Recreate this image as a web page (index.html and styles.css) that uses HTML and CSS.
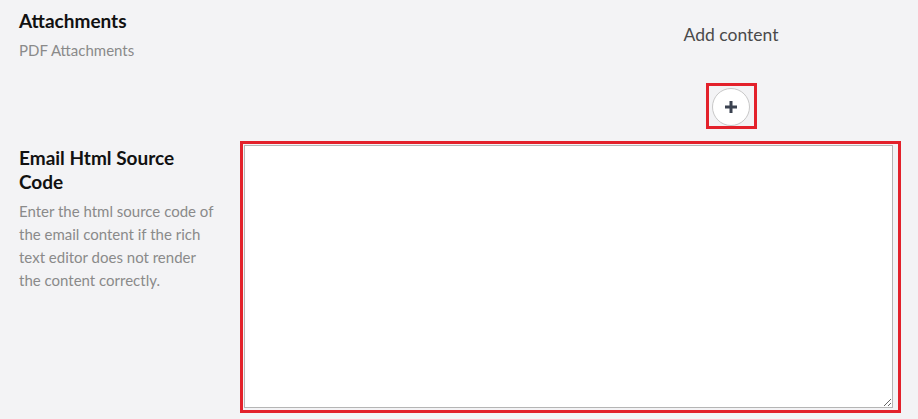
FILE: index.html
```html
<!DOCTYPE html>
<html lang="en">
<head>
<meta charset="utf-8">
<title>Email form</title>
<link rel="stylesheet" href="styles.css">
</head>
<body>
<div class="form">
  <div class="row row-attachments">
    <div class="label-col">
      <div class="label-title">Attachments</div>
      <div class="label-desc">PDF Attachments</div>
    </div>
    <div class="field-col add-area">
      <div class="add-title">Add content</div>
      <div class="add-frame">
        <button class="add-btn" type="button" aria-label="Add content">
          <svg width="14" height="14" viewBox="0 0 14 14"><path d="M7 1v12M1 7h12" stroke="#3b4250" stroke-width="3" fill="none"/></svg>
        </button>
      </div>
    </div>
  </div>
  <div class="row row-source">
    <div class="label-col">
      <div class="label-title">Email Html Source Code</div>
      <div class="label-desc">Enter the html source code of the email content if the rich text editor does not render the content correctly.</div>
    </div>
    <div class="field-col">
      <div class="highlight">
        <textarea class="source"></textarea>
      </div>
    </div>
  </div>
</div>
</body>
</html>
```
FILE: styles.css
```css
html, body {
  margin: 0;
  padding: 0;
  background: #f3f3f5;
}
body {
  font-family: Lato, "Noto Sans", sans-serif;
  width: 918px;
  height: 419px;
  overflow: hidden;
}
.form {
  padding: 0 17px 0 19px;
}
.row {
  display: flex;
  gap: 23px;
}
.label-col {
  width: 198px;
  flex: none;
}
.field-col {
  flex: 1;
  min-width: 0;
}
.label-title {
  font-size: 19px;
  font-weight: 700;
  color: #111;
  line-height: 24px;
}
.label-desc {
  font-size: 15px;
  color: #8a8a8a;
  line-height: 23px;
  margin-top: 6px;
}
.row-attachments {
  height: 141px;
}
.row-attachments .label-col {
  padding-top: 9px;
}
.add-area {
  display: flex;
  flex-direction: column;
  align-items: center;
  padding-left: 321px;
  padding-top: 23px;
}
.add-title {
  font-size: 17.5px;
  color: #4a4a4a;
  line-height: 24px;
}
.add-frame {
  margin-top: 36px;
  border: 3px solid #e3212b;
  padding: 2px 4px 0 3px;
  display: flex;
}
.add-btn {
  width: 38px;
  height: 38px;
  border-radius: 50%;
  border: 1px solid #c8c8c8;
  background: #fff;
  padding: 0;
  display: flex;
  align-items: center;
  justify-content: center;
}
.row-source .label-col {
  padding-top: 5px;
}
.highlight {
  border: 3px solid #e3212b;
  padding: 1px 5px 2px 1px;
  display: flex;
}
.source {
  flex: 1;
  height: 263px;
  box-sizing: border-box;
  border: 1px solid #b5b5b5;
  background: #fff;
  margin: 0;
  border-radius: 0;
  outline: none;
}
```
